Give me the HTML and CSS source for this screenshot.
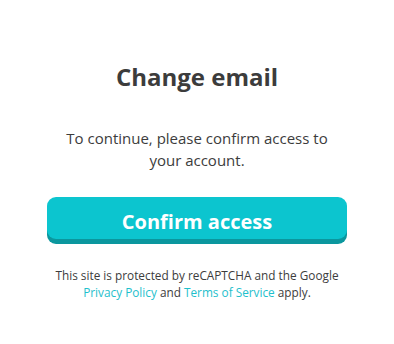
FILE: index.html
```html
<!DOCTYPE html>
<html>
<head>
<meta charset="utf-8">
<link rel="stylesheet" href="styles.css">
</head>
<body>
<main class="page">
  <h1 class="title">Change email</h1>
  <p class="lead">To continue, please confirm access to<br>your account.</p>
  <button class="confirm">Confirm access</button>
  <p class="legal">This site is protected by reCAPTCHA and the Google<br><a href="#">Privacy Policy</a> and <a href="#">Terms of Service</a> apply.</p>
</main>
</body>
</html>
```
FILE: styles.css
```css
html, body {
  margin: 0;
  padding: 0;
  background: #ffffff;
}
body {
  font-family: "Open Sans", "Noto Sans", sans-serif;
  color: #3c3c3c;
}
.page {
  display: flex;
  flex-direction: column;
  align-items: center;
  padding-top: 62px;
  text-align: center;
}
.title {
  margin: 0;
  font-size: 24px;
  font-weight: 700;
  line-height: 30px;
  color: #3c3c3c;
}
.lead {
  margin: 35px 0 0;
  font-size: 15px;
  line-height: 22px;
}
.confirm {
  margin-top: 26px;
  width: 300px;
  height: 42px;
  border: none;
  border-radius: 9px;
  background: #0cc5cf;
  box-shadow: 0 5px 0 #0b979e;
  color: #ffffff;
  font-family: inherit;
  font-size: 20px;
  font-weight: 700;
  padding: 6px 0 0;
}
.legal {
  margin: 28px 0 0;
  font-size: 11.8px;
  line-height: 16.5px;
  color: #3c3c3c;
}
.legal a {
  color: #1ec0cc;
  text-decoration: none;
}
```
